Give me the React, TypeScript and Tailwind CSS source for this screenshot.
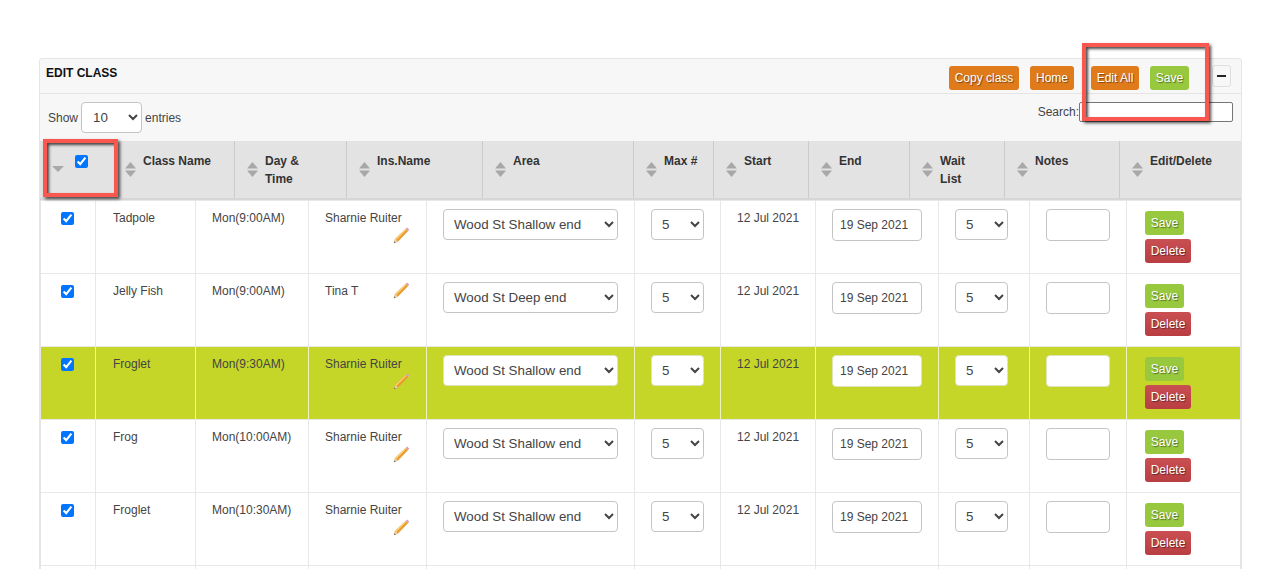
import React from 'react'

const rows = [
  { name: 'Tadpole', time: 'Mon(9:00AM)', ins: 'Sharnie Ruiter', area: 'Wood St Shallow end' },
  { name: 'Jelly Fish', time: 'Mon(9:00AM)', ins: 'Tina T', area: 'Wood St Deep end' },
  { name: 'Froglet', time: 'Mon(9:30AM)', ins: 'Sharnie Ruiter', area: 'Wood St Shallow end', active: true },
  { name: 'Frog', time: 'Mon(10:00AM)', ins: 'Sharnie Ruiter', area: 'Wood St Shallow end' },
  { name: 'Froglet', time: 'Mon(10:30AM)', ins: 'Sharnie Ruiter', area: 'Wood St Shallow end' },
]

const columns = [
  { label: ['Class Name'] },
  { label: ['Day &', 'Time'] },
  { label: ['Ins.Name'] },
  { label: ['Area'] },
  { label: ['Max #'] },
  { label: ['Start'] },
  { label: ['End'] },
  { label: ['Wait', 'List'] },
  { label: ['Notes'] },
  { label: ['Edit/Delete'] },
]

const headGrid = 'grid grid-cols-[72px_122px_112px_136px_151px_80px_95px_101px_95px_115px_122px]'
const rowGrid = 'grid grid-cols-[55px_100px_113px_118px_208px_86px_95px_123px_91px_97px_113px]'
const shadowText = '[text-shadow:1px_1px_1px_rgba(0,0,0,0.45)]'
const btn = `flex h-6 items-center justify-center rounded-[3px] text-xs text-white ${shadowText}`

const SortIcon = () => (
  <svg width="11" height="15" viewBox="0 0 11 15" className="shrink-0">
    <path d="M5.5 0 L11 6.5 H0 Z" fill="#a8a8a8" />
    <path d="M0 8.5 H11 L5.5 15 Z" fill="#a8a8a8" />
  </svg>
)

const Pencil = () => (
  <svg width="17" height="17" viewBox="0 0 17 17" className="ml-auto shrink-0">
    <path d="M1 16 L2.2 12 L13 1.8 L15 3.9 L4.8 14.6 Z" fill="#ee9a26" stroke="#c9a063" strokeWidth="0.4" />
    <path d="M2.2 12 L13 1.8 L13.7 2.5 L3.2 13 Z" fill="#fcd27a" />
    <path d="M13 1.8 L14.2 0.6 L16.3 2.7 L15 3.9 Z" fill="#d49ad0" />
    <path d="M1 16 L2.2 12 L4.8 14.6 Z" fill="#e8d3a8" />
    <path d="M1 16 L1.4 14.4 L2.7 15.5 Z" fill="#555555" />
  </svg>
)

const Row = ({ row }: { row?: (typeof rows)[number] }) => {
  const line = row?.active ? 'border-[#eef3c0]' : 'border-[#e8e8e8]'
  const cell = `border-r ${line}`
  const field = `rounded-[4px] border bg-white text-[#444] ${row?.active ? 'border-[#dfe3b8]' : 'border-[#c4c4c4]'}`

  if (!row) {
    return (
      <div className={`${rowGrid} h-[73px] border-t border-[#e8e8e8]`}>
        {Array.from({ length: 11 }).map((_, i) => (
          <div key={i} className={i < 10 ? cell : ''} />
        ))}
      </div>
    )
  }

  return (
    <div className={`${rowGrid} h-[73px] border-t border-[#e8e8e8] text-xs leading-[18px] text-[#444] ${row.active ? 'bg-[#c5d629]' : 'bg-white'}`}>
      <div className={`${cell} flex justify-center pr-px pt-[11px]`}>
        <input type="checkbox" defaultChecked className="h-[13px] w-[13px]" />
      </div>
      <div className={`${cell} pl-[17px] pt-2`}>{row.name}</div>
      <div className={`${cell} pl-4 pt-2`}>{row.time}</div>
      <div className={`${cell} flex flex-wrap content-start pl-4 pr-4 pt-2`}>
        <span>{row.ins}</span>
        <Pencil />
      </div>
      <div className={`${cell} pl-4 pt-2`}>
        <select className={`${field} h-[31px] w-[175px] pl-[6px] text-[13.33px]`} defaultValue={row.area}>
          <option>{row.area}</option>
        </select>
      </div>
      <div className={`${cell} pl-4 pt-2`}>
        <select className={`${field} h-[31px] w-[53px] pl-[6px] text-[13.33px]`} defaultValue="5">
          <option>5</option>
        </select>
      </div>
      <div className={`${cell} pl-4 pt-2`}>12 Jul 2021</div>
      <div className={`${cell} pl-4 pt-2`}>
        <input defaultValue="19 Sep 2021" className={`${field} h-8 w-[90px] pl-[7px] text-xs`} />
      </div>
      <div className={`${cell} pl-4 pt-2`}>
        <select className={`${field} h-[31px] w-[53px] pl-[6px] text-[13.33px]`} defaultValue="5">
          <option>5</option>
        </select>
      </div>
      <div className={`${cell} pl-4 pt-2`}>
        <input className={`${field} h-8 w-16`} />
      </div>
      <div className="flex flex-col items-start gap-1 pl-[18px] pt-[10px]">
        <button className={`${btn} w-[39px] bg-[#97c83e]`}>Save</button>
        <button className={`${btn} w-[46px] bg-linear-to-b from-[#c94f53] to-[#b93e42]`}>Delete</button>
      </div>
    </div>
  )
}

export default function App() {
  return (
    <div className="relative h-[569px] overflow-hidden bg-white pl-[39px] pt-[58px] [font-family:'Liberation_Sans',Arial,sans-serif]">
      <div className="w-[1203px] rounded-t-[3px] border border-[#e5e5e5] bg-[#f7f7f7]">
        {/* panel title */}
        <div className="flex h-[35px] items-start border-b border-[#e5e5e5] pl-[6px] pr-[10px]">
          <div className="pt-[5px] text-xs font-bold leading-[18px] text-[#111]">EDIT CLASS</div>
          <div className="ml-auto flex items-start pt-[7px]">
            <button className={`${btn} w-[70px] bg-[#e07b1c]`}>Copy class</button>
            <button className={`${btn} ml-[11px] w-11 bg-[#e07b1c]`}>Home</button>
            <button className={`${btn} ml-[17px] w-12 bg-[#e07b1c]`}>Edit All</button>
            <button className={`${btn} ml-[11px] w-[39px] bg-[#97c83e]`}>Save</button>
            <button className="-mt-px ml-[23px] flex h-[22px] w-[19px] items-center justify-center rounded-[3px] border border-[#dedede]">
              <span className="h-[2px] w-[9px] bg-[#222]" />
            </button>
          </div>
        </div>

        {/* length + search */}
        <div className="flex h-[47px] items-start justify-between pl-2 pr-2 pt-2 text-xs text-[#444]">
          <div className="flex items-center gap-[3px]">
            <span>Show</span>
            <select className="h-[31px] w-[61px] rounded-[4px] border border-[#c4c4c4] bg-white pl-[7px] text-[13.33px]" defaultValue="10">
              <option>10</option>
            </select>
            <span>entries</span>
          </div>
          <div className="flex items-center">
            <span>Search:</span>
            <input className="h-5 w-[154px] rounded-[2px] border border-[#767676] bg-white" />
          </div>
        </div>

        {/* table head */}
        <div className={`${headGrid} h-[59px] border-b-2 border-[#d6d6d6] bg-[#e3e3e3] text-xs font-bold leading-[18px] text-[#333]`}>
          <div className="relative">
            <svg width="12" height="6" viewBox="0 0 12 6" className="absolute left-3 top-[25px]">
              <path d="M0 0 H12 L6 6 Z" fill="#a8a8a8" />
            </svg>
            <input type="checkbox" defaultChecked className="absolute left-[35px] top-[14px] h-[13px] w-[13px]" />
          </div>
          {columns.map((c, i) => (
            <div key={i} className={`flex items-start gap-[7px] border-l border-[#cccccc] pl-3 pt-[11px] ${i === 0 ? 'border-l-[#e3e3e3]' : ''}`}>
              <span className="pt-[10px]">
                <SortIcon />
              </span>
              <div>
                {c.label.map(l => (
                  <div key={l}>{l}</div>
                ))}
              </div>
            </div>
          ))}
        </div>

        <div className="border-x border-[#e5e5e5] bg-white">
          {rows.map((r, i) => (
            <Row key={i} row={r} />
          ))}
          <Row />
        </div>
      </div>

      {/* red annotation boxes */}
      <div className="absolute left-[43px] top-[139px] h-[58px] w-[75px] border-4 border-[#f9574f] shadow-[2px_2px_3px_rgba(0,0,0,0.7),inset_2px_2px_3px_rgba(0,0,0,0.7)]" />
      <div className="absolute left-[1082px] top-[43px] h-[78px] w-[127px] border-4 border-[#f9574f] shadow-[2px_2px_3px_rgba(0,0,0,0.7),inset_2px_2px_3px_rgba(0,0,0,0.7)]" />
    </div>
  )
}
